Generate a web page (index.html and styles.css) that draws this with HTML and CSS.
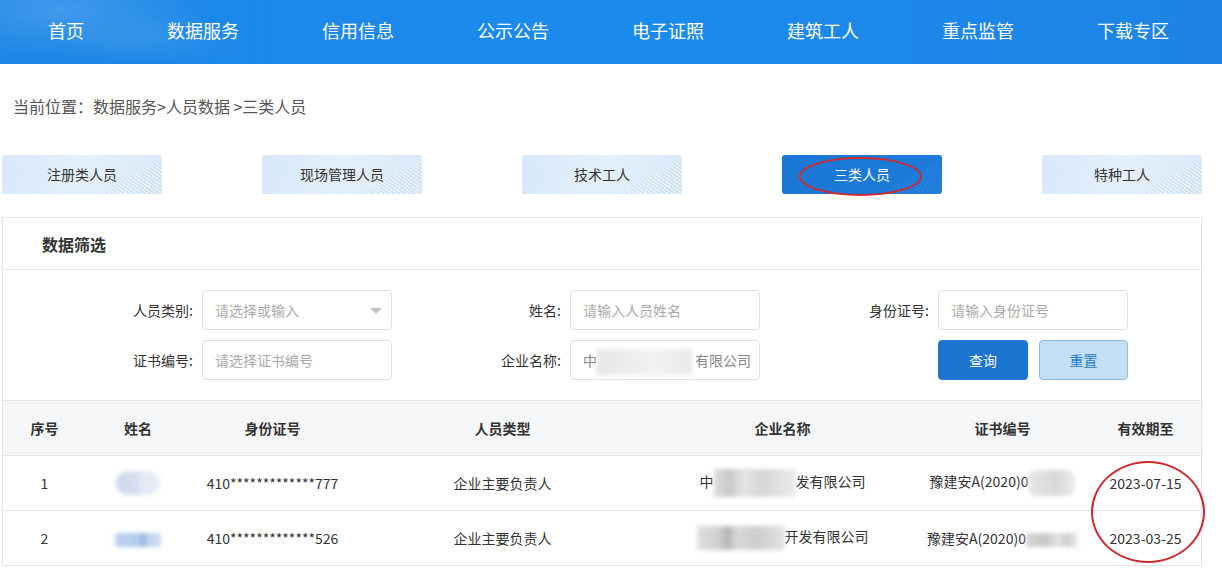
FILE: index.html
```html
<!DOCTYPE html>
<html>
<head>
    <meta charset="utf-8">
    <title>三类人员</title>
    <link rel="stylesheet" href="styles.css">
</head>
<body>
    <!--顶部导航-->
    <div class="topbar">
        <ul class="menu">
            <li>首页</li>
            <li>数据服务</li>
            <li>信用信息</li>
            <li>公示公告</li>
            <li>电子证照</li>
            <li>建筑工人</li>
            <li>重点监管</li>
            <li>下载专区</li>
        </ul>
    </div>

    <!--当前位置-->
    <div class="crumb">当前位置：数据服务&gt;人员数据 &gt;三类人员</div>

    <!--人员分类-->
    <div class="tabs">
        <div class="tab">注册类人员</div>
        <div class="tab">现场管理人员</div>
        <div class="tab">技术工人</div>
        <div class="tab active">三类人员<span class="mark mark-tab"></span></div>
        <div class="tab">特种工人</div>
    </div>

    <!--数据筛选-->
    <div class="panel">
        <div class="panel-title">数据筛选</div>
        <div class="filter">
            <label class="lbl">人员类别:</label>
            <div class="ipt select"><span class="ph">请选择或输入</span><i class="caret"></i></div>
            <label class="lbl">姓名:</label>
            <input class="ipt" placeholder="请输入人员姓名">
            <label class="lbl">身份证号:</label>
            <input class="ipt" placeholder="请输入身份证号">

            <label class="lbl">证书编号:</label>
            <input class="ipt" placeholder="请选择证书编号">
            <label class="lbl">企业名称:</label>
            <div class="ipt value">中<span class="blur b-input"></span>有限公司</div>
            <div></div>
            <div class="btns">
                <button class="btn btn-query">查询</button>
                <button class="btn btn-reset">重置</button>
            </div>
        </div>

        <table class="list">
            <colgroup>
                <col style="width:83px">
                <col style="width:104px">
                <col style="width:165px">
                <col style="width:295px">
                <col style="width:265px">
                <col style="width:175px">
                <col style="width:111px">
            </colgroup>
            <tr>
                <th>序号</th>
                <th>姓名</th>
                <th>身份证号</th>
                <th>人员类型</th>
                <th>企业名称</th>
                <th>证书编号</th>
                <th>有效期至</th>
            </tr>
            <tr>
                <td>1</td>
                <td><span class="blur b-name1"></span></td>
                <td>410*************777</td>
                <td>企业主要负责人</td>
                <td>中<span class="blur b-comp1"></span>发有限公司</td>
                <td>豫建安A(2020)0<span class="blur b-cert1"></span></td>
                <td>2023-07-15</td>
            </tr>
            <tr>
                <td>2</td>
                <td><span class="blur b-name2"></span></td>
                <td>410*************526</td>
                <td>企业主要负责人</td>
                <td><span class="blur b-comp2"></span>开发有限公司</td>
                <td>豫建安A(2020)0<span class="blur b-cert2"></span></td>
                <td>2023-03-25</td>
            </tr>
        </table>
        <span class="mark mark-date"></span>
    </div>
</body>
</html>
```

FILE: styles.css
```css
/*基础*/
body{
    margin: 0;
    font-family: "Microsoft YaHei", "Noto Sans CJK SC", sans-serif;
    color: #333;
    background: #fff;
    width: 1222px;
}

/*顶部导航*/
.topbar{
    height: 64px;
    background:
        radial-gradient(ellipse 220px 70px at 60px 10px, rgba(255,255,255,0.16), rgba(255,255,255,0) 70%),
        radial-gradient(ellipse 140px 40px at 150px 40px, rgba(255,255,255,0.08), rgba(255,255,255,0) 70%),
        linear-gradient(90deg, #1c86e6, #1b8bee 50%, #1d84e4);
}
ul.menu{
    list-style-type: none;
    margin: 0;
    padding: 0 53px 0 48px;
    height: 60px;
    display: flex;
    justify-content: space-between;
    align-items: center;
}
ul.menu li{
    color: #fff;
    font-size: 18px;
    line-height: 24px;
}

/*当前位置*/
.crumb{
    padding-left: 13px;
    margin-top: 22px;
    height: 40px;
    line-height: 40px;
    font-size: 16px;
    color: #555;
}

/*分类按钮*/
.tabs{
    display: flex;
    gap: 100px;
    padding-left: 2px;
    margin-top: 29px;
}
.tab{
    position: relative;
    width: 160px;
    height: 39px;
    line-height: 39px;
    text-align: center;
    font-size: 14px;
    color: #333;
    border-radius: 3px;
    background: linear-gradient(100deg, #d6e8f9 0%, #e4f0fb 50%, #d9e9f8 100%);
}
.tab::after{
    content: "";
    position: absolute;
    right: 0;
    bottom: 0;
    width: 62px;
    height: 39px;
    border-radius: 0 0 3px 0;
    background: repeating-linear-gradient(35deg, rgba(255,255,255,0.8) 0 1px, rgba(180,206,234,0.35) 1px 3px);
    clip-path: polygon(100% 10%, 100% 100%, 0 100%);
    opacity: 0.7;
}
.tab.active{
    color: #fff;
    background: linear-gradient(90deg, #1b77d4, #1c7bd9);
}
.tab.active::after{
    background: repeating-linear-gradient(35deg, rgba(255,255,255,0.1) 0 1px, rgba(255,255,255,0) 1px 3px);
}

/*红色圈注*/
.mark{
    position: absolute;
    border: 2px solid #cf2a2f;
    border-radius: 50%;
    z-index: 3;
}
.mark-tab{
    left: 17px;
    top: 2px;
    width: 119px;
    height: 35px;
}
.mark-date{
    left: 1088px;
    top: 243px;
    width: 110px;
    height: 98px;
}

/*数据筛选面板*/
.panel{
    position: relative;
    margin: 23px 0 0 2px;
    width: 1198px;
    border: 1px solid #e2e4e8;
}
.panel-title{
    height: 51px;
    line-height: 52px;
    padding-left: 39px;
    font-size: 16px;
    font-weight: bold;
    color: #333;
    border-bottom: 1px solid #e2e4e8;
}
.filter{
    display: grid;
    grid-template-columns: 199px 190px 178px 190px 178px 190px;
    grid-auto-rows: 40px;
    row-gap: 10px;
    padding: 20px 0;
}
.lbl{
    text-align: right;
    padding-right: 9px;
    line-height: 40px;
    font-size: 14px;
    color: #333;
}
.ipt{
    box-sizing: border-box;
    height: 40px;
    width: 190px;
    border: 1px solid #dcdfe6;
    border-radius: 4px;
    padding: 0 0 0 12px;
    margin: 0;
    font-family: inherit;
    font-size: 14px;
    line-height: 38px;
    color: #777;
    background: #fff;
    outline: none;
}
.ipt::placeholder{
    color: #aaa;
}
.ph{
    color: #aaa;
}
.select{
    position: relative;
}
.caret{
    position: absolute;
    right: 9px;
    top: 17px;
    width: 0;
    height: 0;
    border-left: 6px solid transparent;
    border-right: 6px solid transparent;
    border-top: 6px solid #c0c4cc;
}
.value{
    white-space: nowrap;
    overflow: hidden;
    color: #888;
}
.btns{
    display: flex;
    gap: 11px;
}
.btn{
    width: 90px;
    height: 40px;
    border-radius: 4px;
    font-family: inherit;
    font-size: 14px;
    cursor: pointer;
}
.btn-query{
    background: #1b74d0;
    border: 1px solid #1b74d0;
    color: #fff;
}
.btn-reset{
    width: 89px;
    background: #c4def5;
    border: 1px solid #8fbbe6;
    color: #2479cf;
}

/*列表*/
table.list{
    width: 1198px;
    border-collapse: collapse;
    table-layout: fixed;
}
table.list th,
table.list td{
    height: 54px;
    padding: 0;
    text-align: center;
    font-size: 14px;
    color: #333;
    border-top: 1px solid #e2e4e8;
    white-space: nowrap;
}
table.list th{
    background: #f5f6f8;
    font-weight: bold;
}

/*打码区域*/
.blur{
    display: inline-block;
    vertical-align: middle;
    filter: blur(2px);
}
.b-input{
    width: 95px;
    height: 26px;
    margin: 0 3px 0 0;
    background: linear-gradient(90deg, #e6e6e6, #f2f2f2 60%, #e9e9e9);
}
.b-name1{
    width: 44px;
    height: 24px;
    border-radius: 12px;
    background: linear-gradient(90deg, #cdd9ea 0%, #d4def0 50%, #e3eaf5 55%, #e6ecf6 100%);
}
.b-name2{
    width: 46px;
    height: 14px;
    background: linear-gradient(90deg, #bcd2ef 0%, #b3cbec 50%, #97b6e0 60%, #c2d6f0 75%, #cddcf1 100%);
}
.b-comp1{
    width: 82px;
    height: 28px;
    background: linear-gradient(90deg, #dcdcdc 0%, #c8c8c8 20%, #e4e4e4 35%, #d6d6d6 60%, #ececec 100%);
}
.b-comp2{
    width: 88px;
    height: 24px;
    background: linear-gradient(90deg, #e0e0e0 0%, #cfcfcf 25%, #b5b5b5 35%, #d8d8d8 45%, #cdcdcd 70%, #e4e4e4 100%);
}
.b-cert1{
    width: 47px;
    height: 26px;
    border-radius: 8px;
    background: linear-gradient(90deg, #e6e6e6, #d8d8d8 60%, #ededed);
}
.b-cert2{
    width: 52px;
    height: 14px;
    background: linear-gradient(90deg, #d5d5d5, #c6c6c6 40%, #e2e2e2 60%, #cfcfcf 80%, #ececec);
}
```
